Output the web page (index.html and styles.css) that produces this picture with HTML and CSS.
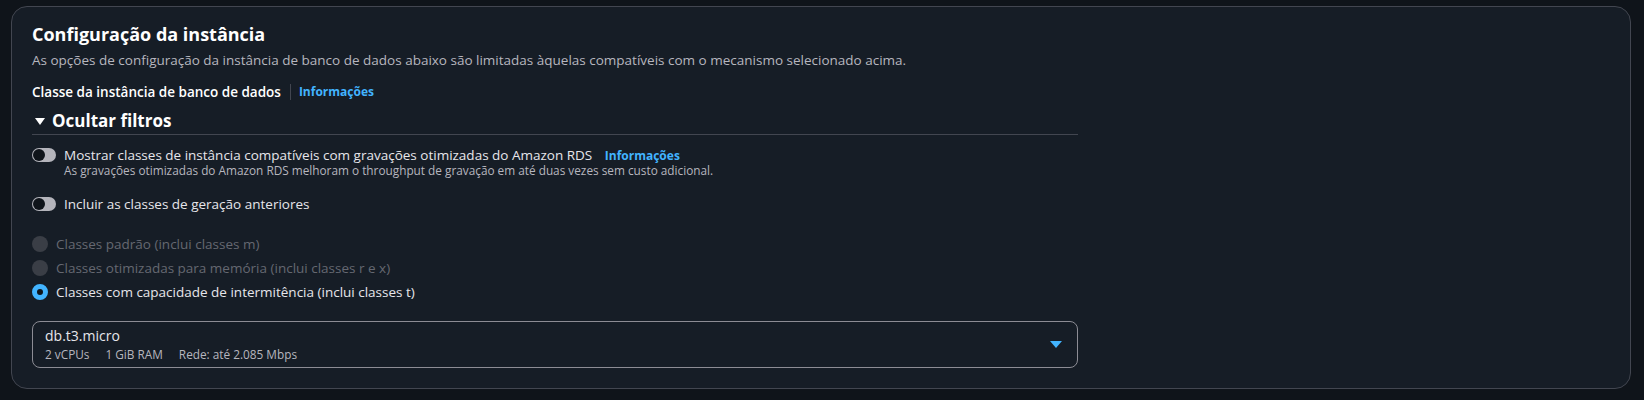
FILE: index.html
```html
<!DOCTYPE html>
<html lang="pt-BR">
<head>
<meta charset="utf-8">
<title>Configuração da instância</title>
<link rel="stylesheet" href="styles.css">
</head>
<body>
<div class="page">
  <section class="card">
    <h2 class="title">Configuração da instância</h2>
    <p class="desc">As opções de configuração da instância de banco de dados abaixo são limitadas àquelas compatíveis com o mecanismo selecionado acima.</p>

    <div class="field-label">
      <span class="label-text">Classe da instância de banco de dados</span>
      <span class="sep"></span>
      <a class="info" href="#">Informações</a>
    </div>

    <div class="filters">
      <div class="exp-header">
        <svg class="exp-caret" width="10" height="8" viewBox="0 0 10 8"><polygon points="0,0 10,0 5,7" fill="#ffffff"/></svg>
        <span>Ocultar filtros</span>
      </div>

      <div class="toggle-row first">
        <span class="toggle"><span class="knob"></span></span>
        <div class="toggle-text">
          <div class="toggle-label">Mostrar classes de instância compatíveis com gravações otimizadas do Amazon RDS <a class="info info-inline" href="#">Informações</a></div>
          <div class="toggle-desc">As gravações otimizadas do Amazon RDS melhoram o throughput de gravação em até duas vezes sem custo adicional.</div>
        </div>
      </div>

      <div class="toggle-row second">
        <span class="toggle"><span class="knob"></span></span>
        <div class="toggle-text">
          <div class="toggle-label">Incluir as classes de geração anteriores</div>
        </div>
      </div>

      <div class="radios">
        <div class="radio disabled"><span class="dot"></span><span>Classes padrão (inclui classes m)</span></div>
        <div class="radio disabled"><span class="dot"></span><span>Classes otimizadas para memória (inclui classes r e x)</span></div>
        <div class="radio checked"><span class="dot"></span><span>Classes com capacidade de intermitência (inclui classes t)</span></div>
      </div>

      <div class="select">
        <div class="select-text">
          <div class="select-value">db.t3.micro</div>
          <div class="select-tags"><span>2 vCPUs</span><span>1 GiB RAM</span><span>Rede: até 2.085 Mbps</span></div>
        </div>
        <svg class="select-caret" width="12" height="8" viewBox="0 0 12 8"><polygon points="0,0 12,0 6,7" fill="#42b4ff"/></svg>
      </div>
    </div>
  </section>
</div>
</body>
</html>
```

FILE: styles.css
```css
* { box-sizing: border-box; }

html, body {
  margin: 0;
  padding: 0;
  background: #0f141a;
  height: 100%;
}

body {
  font-family: "Open Sans", "Noto Sans", sans-serif;
  color: #dedee3;
  -webkit-font-smoothing: antialiased;
}

.page {
  padding: 6px 13px 13px 11px;
}

.card {
  background: #161d26;
  border: 1px solid #424650;
  border-radius: 16px;
  padding: 16px 20px 20px 20px;
}

.title {
  margin: 0;
  font-size: 18px;
  line-height: 22px;
  font-weight: 700;
  color: #ffffff;
}

.desc {
  margin: 5px 0 0 0;
  font-size: 13.5px;
  line-height: 20px;
  color: #b6b6bf;
}

.field-label {
  display: flex;
  align-items: center;
  margin-top: 12px;
  height: 20px;
}

.label-text {
  font-size: 13.5px;
  line-height: 20px;
  font-weight: 600;
  color: #ffffff;
}

.sep {
  width: 1px;
  height: 16px;
  background: #424650;
  margin: 0 8px 0 9px;
}

.info {
  font-size: 12px;
  line-height: 16px;
  font-weight: 700;
  color: #42b4ff;
  text-decoration: none;
}

.filters {
  max-width: 1046px;
  margin-top: 9px;
}

.exp-header {
  display: flex;
  align-items: center;
  gap: 7px;
  font-size: 17px;
  line-height: 20px;
  font-weight: 700;
  color: #ffffff;
  padding-bottom: 3px;
  border-bottom: 1px solid #424650;
}

.exp-caret {
  margin-left: 3px;
  margin-top: 1px;
}

.toggle-row {
  display: flex;
  align-items: flex-start;
  gap: 8px;
}

.toggle-row.first { margin-top: 10px; }
.toggle-row.second { margin-top: 16px; }

.toggle {
  flex: none;
  width: 24px;
  height: 14px;
  margin-top: 3px;
  border-radius: 7px;
  background: #b4b4bb;
  display: flex;
  align-items: center;
  padding-left: 1px;
}

.knob {
  width: 12px;
  height: 12px;
  border-radius: 50%;
  background: #0f141a;
}

.toggle-label {
  font-size: 13.5px;
  line-height: 20px;
  color: #e6e6eb;
}

.info-inline {
  margin-left: 9px;
}

.toggle-desc {
  margin-top: -3px;
  font-size: 11.8px;
  line-height: 16px;
  color: #b6b6bf;
}

.radios {
  margin-top: 20px;
  display: flex;
  flex-direction: column;
  gap: 4px;
}

.radio {
  display: flex;
  align-items: center;
  gap: 8px;
  font-size: 13.5px;
  line-height: 20px;
  color: #e6e6eb;
}

.radio .dot {
  flex: none;
  width: 16px;
  height: 16px;
  border-radius: 50%;
}

.radio.disabled { color: #656871; }
.radio.disabled .dot { background: #3a3e46; }

.radio.checked .dot {
  background: #0f141a;
  border: 5px solid #42b4ff;
}

.select {
  margin-top: 19px;
  border: 1px solid #8c8c94;
  border-radius: 8px;
  padding: 4px 15px 5px 12px;
  display: flex;
  align-items: center;
  justify-content: space-between;
}

.select-value {
  font-size: 14px;
  line-height: 20px;
  color: #e6e6eb;
}

.select-tags {
  display: flex;
  gap: 16px;
  font-size: 11.8px;
  line-height: 16px;
  color: #b6b6bf;
}

.select-caret {
  margin-top: 2px;
}
```
